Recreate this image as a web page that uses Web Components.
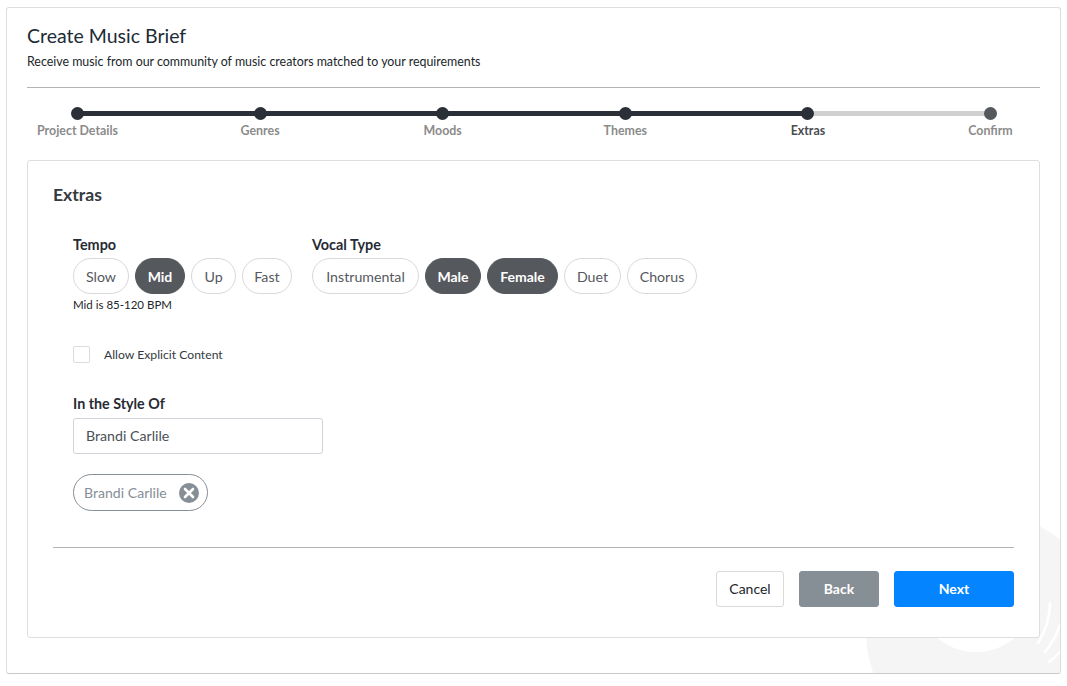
<!DOCTYPE html>
<html>
<head>
<meta charset="utf-8">
<style>
html, body { margin: 0; padding: 0; background: #fff; }
body { font-family: "Lato", "Open Sans", sans-serif; color: #212529; }
</style>
</head>
<body>
<brief-page>
  <brief-stepper slot="stepper"></brief-stepper>
  <extras-panel></extras-panel>
</brief-page>

<script>
class BriefPage extends HTMLElement {
    constructor() {
        super();
        this.attachShadow({ mode: 'open' });
        this.shadowRoot.innerHTML = `
            <style>
                :host { display: block; padding: 7px 6px 12px 6px; height: 686px; box-sizing: border-box; }
                .card {
                    position: relative; overflow: hidden; box-sizing: border-box; height: 667px;
                    border: 1px solid #dedede; border-bottom-color: #c9c9c9; border-radius: 3px;
                    padding: 14px 20px 0 20px; background: #fff;
                }
                .mark { position: absolute; left: 853px; top: 512px; width: 200px; height: 160px; }
                .inner { position: relative; }
                h1 { font-size: 19.5px; line-height: 27px; font-weight: 400; margin: 0; color: #212b36; }
                p { font-size: 12.4px; line-height: 16px; margin: 5px 0 0; color: #212529; }
                hr { border: 0; border-top: 1px solid #b5b5b5; margin: 17px 0 0; }
            </style>
            <div class="card">
                <svg class="mark" viewBox="0 0 200 160" aria-hidden="true">
                    <circle cx="125" cy="112" r="119" fill="#f5f5f5"/>
                    <circle cx="116" cy="72" r="60" fill="#fff"/>
                    <g fill="none" stroke="#fff" stroke-width="2.5" stroke-linecap="round">
                        <path d="M190 83 A77 77 0 0 1 178 123"/>
                        <path d="M200 105 A90 90 0 0 1 185 132"/>
                        <path d="M200 132 A102 102 0 0 1 189 142"/>
                    </g>
                </svg>
                <div class="inner">
                    <h1>Create Music Brief</h1>
                    <p>Receive music from our community of music creators matched to your requirements</p>
                    <hr>
                    <slot name="stepper"></slot>
                    <slot></slot>
                </div>
            </div>
        `;
    }
}

class BriefStepper extends HTMLElement {
    constructor() {
        super();
        this.attachShadow({ mode: 'open' });
    }

    connectedCallback() {
        const steps = ['Project Details', 'Genres', 'Moods', 'Themes', 'Extras', 'Confirm'];
        const current = 4;
        const cells = steps.map((name, i) => {
            let cls = i < current ? 'done' : i === current ? 'current' : 'todo';
            return `<div class="step ${cls}"><span class="dot"></span><span class="name">${name}</span></div>`;
        }).join('');
        this.shadowRoot.innerHTML = `
            <style>
                :host { display: block; margin-top: 19px; }
                .steps { display: grid; grid-template-columns: repeat(6, 1fr); margin: 0 -40.8px; width: 1095.6px; }
                .step { position: relative; display: flex; flex-direction: column; align-items: center; }
                .step::before { content: ""; position: absolute; top: 4px; left: 50%; width: 100%; height: 5px; background: #2b3038; }
                .step.current::before { background: #d0d0d0; }
                .step:last-child::before { display: none; }
                .dot { position: relative; width: 13px; height: 13px; border-radius: 50%; background: #2b3038; }
                .todo .dot { background: #55585d; }
                .name { font-size: 12.4px; line-height: 16px; font-weight: 700; margin-top: 3px; color: #8b8b8b; }
                .current .name { color: #4a4d52; }
            </style>
            <div class="steps">${cells}</div>
        `;
    }
}

class PillButton extends HTMLElement {
    constructor() {
        super();
        this.attachShadow({ mode: 'open' });
        this.shadowRoot.innerHTML = `
            <style>
                :host {
                    display: inline-flex; align-items: center; justify-content: center; box-sizing: border-box; height: 36px;
                    border: 1px solid #d9d9d9; border-radius: 18px; background: #fff;
                    font-size: 14.2px; color: #55585d;
                }
                :host([on]) { background: #55585d; border-color: #55585d; color: #fff; font-weight: 700; font-size: 14px; }
            </style>
            <slot></slot>
        `;
    }

    connectedCallback() {
        this.style.width = this.getAttribute('w') + 'px';
    }
}

class PillGroup extends HTMLElement {
    constructor() {
        super();
        this.attachShadow({ mode: 'open' });
        this.shadowRoot.innerHTML = `
            <style>
                :host { display: block; }
                .label { font-size: 14.4px; line-height: 20px; font-weight: 700; color: #272b33; margin-bottom: 3px; }
                .pills { display: flex; gap: 6px; }
                .help { font-size: 11.5px; line-height: 16px; color: #212529; margin-top: 3px; }
                .help:empty { display: none; }
            </style>
            <div class="label"></div>
            <div class="pills"><slot></slot></div>
            <div class="help"></div>
        `;
    }

    connectedCallback() {
        this.shadowRoot.querySelector('.label').textContent = this.getAttribute('label');
        this.shadowRoot.querySelector('.help').textContent = this.getAttribute('help') || '';
    }
}

class RemoveTag extends HTMLElement {
    constructor() {
        super();
        this.attachShadow({ mode: 'open' });
        this.shadowRoot.innerHTML = `
            <style>
                :host {
                    display: inline-flex; align-items: center; gap: 12px; box-sizing: border-box; height: 37px;
                    padding: 0 8px 0 10px; border: 1px solid #868e96; border-radius: 19px;
                    font-size: 14.1px; color: #868e96;
                }
                svg { width: 20px; height: 20px; display: block; }
            </style>
            <slot></slot>
            <svg viewBox="0 0 20 20" aria-hidden="true">
                <circle cx="10" cy="10" r="10" fill="#868e96"/>
                <path d="M6 6 L14 14 M14 6 L6 14" stroke="#fff" stroke-width="2.6" stroke-linecap="round"/>
            </svg>
        `;
    }
}

class FormButton extends HTMLElement {
    constructor() {
        super();
        this.attachShadow({ mode: 'open' });
        this.shadowRoot.innerHTML = `
            <style>
                :host {
                    display: inline-flex; align-items: center; justify-content: center; box-sizing: border-box;
                    height: 36px; padding-bottom: 2px; border-radius: 3px; font-size: 14px;
                    border: 1px solid #d9d9d9; background: #fff; color: #212529; width: 68px;
                }
                :host([kind="back"]) { background: #868e96; border-color: #868e96; color: #fff; font-weight: 700; width: 80px; }
                :host([kind="next"]) { background: #0484ff; border-color: #0484ff; color: #fff; font-weight: 700; width: 120px; }
            </style>
            <slot></slot>
        `;
    }
}

class ExtrasPanel extends HTMLElement {
    constructor() {
        super();
        this.attachShadow({ mode: 'open' });
        this.shadowRoot.innerHTML = `
            <style>
                :host {
                    display: block; box-sizing: border-box; height: 478px; margin-top: 21px; padding: 22px 25px 0;
                    border: 1px solid #dedede; border-radius: 3px; background: #fff;
                }
                h2 { font-size: 17.6px; line-height: 24px; font-weight: 700; color: #343a40; margin: 0; }
                .body { padding: 0 20px; }
                .row { display: flex; gap: 20px; margin-top: 28px; }
                .check { display: flex; align-items: center; gap: 14px; margin-top: 33px; font-size: 12.2px; line-height: 17px; color: #343a40; }
                .box { width: 15px; height: 15px; border: 1px solid #dcdcdc; border-radius: 2px; }
                .style-label { font-size: 14.3px; line-height: 20px; font-weight: 700; color: #272b33; margin-top: 31px; }
                .input {
                    box-sizing: border-box; width: 250px; height: 36px; margin-top: 4px; padding: 0 12px 2px;
                    display: flex; align-items: center; border: 1px solid #ced4da; border-radius: 3px;
                    font-size: 14.2px; color: #495057;
                }
                .tags { margin-top: 20px; display: flex; }
                hr { border: 0; border-top: 1px solid #b5b5b5; margin: 36px 0 0; }
                .actions { display: flex; justify-content: flex-end; gap: 15px; margin-top: 23px; }
            </style>
            <h2>Extras</h2>
            <div class="body">
                <div class="row">
                    <pill-group label="Tempo" help="Mid is 85-120 BPM">
                        <pill-button w="56">Slow</pill-button>
                        <pill-button w="50" on>Mid</pill-button>
                        <pill-button w="45">Up</pill-button>
                        <pill-button w="50">Fast</pill-button>
                    </pill-group>
                    <pill-group label="Vocal Type">
                        <pill-button w="107">Instrumental</pill-button>
                        <pill-button w="56" on>Male</pill-button>
                        <pill-button w="71" on>Female</pill-button>
                        <pill-button w="57">Duet</pill-button>
                        <pill-button w="70">Chorus</pill-button>
                    </pill-group>
                </div>
                <div class="check"><span class="box"></span><span>Allow Explicit Content</span></div>
                <div class="style-label">In the Style Of</div>
                <div class="input">Brandi Carlile</div>
                <div class="tags"><remove-tag>Brandi Carlile</remove-tag></div>
            </div>
            <hr>
            <div class="actions">
                <form-button>Cancel</form-button>
                <form-button kind="back">Back</form-button>
                <form-button kind="next">Next</form-button>
            </div>
        `;
    }
}

customElements.define('brief-page', BriefPage);
customElements.define('brief-stepper', BriefStepper);
customElements.define('pill-button', PillButton);
customElements.define('pill-group', PillGroup);
customElements.define('remove-tag', RemoveTag);
customElements.define('form-button', FormButton);
customElements.define('extras-panel', ExtrasPanel);
</script>
</body>
</html>
